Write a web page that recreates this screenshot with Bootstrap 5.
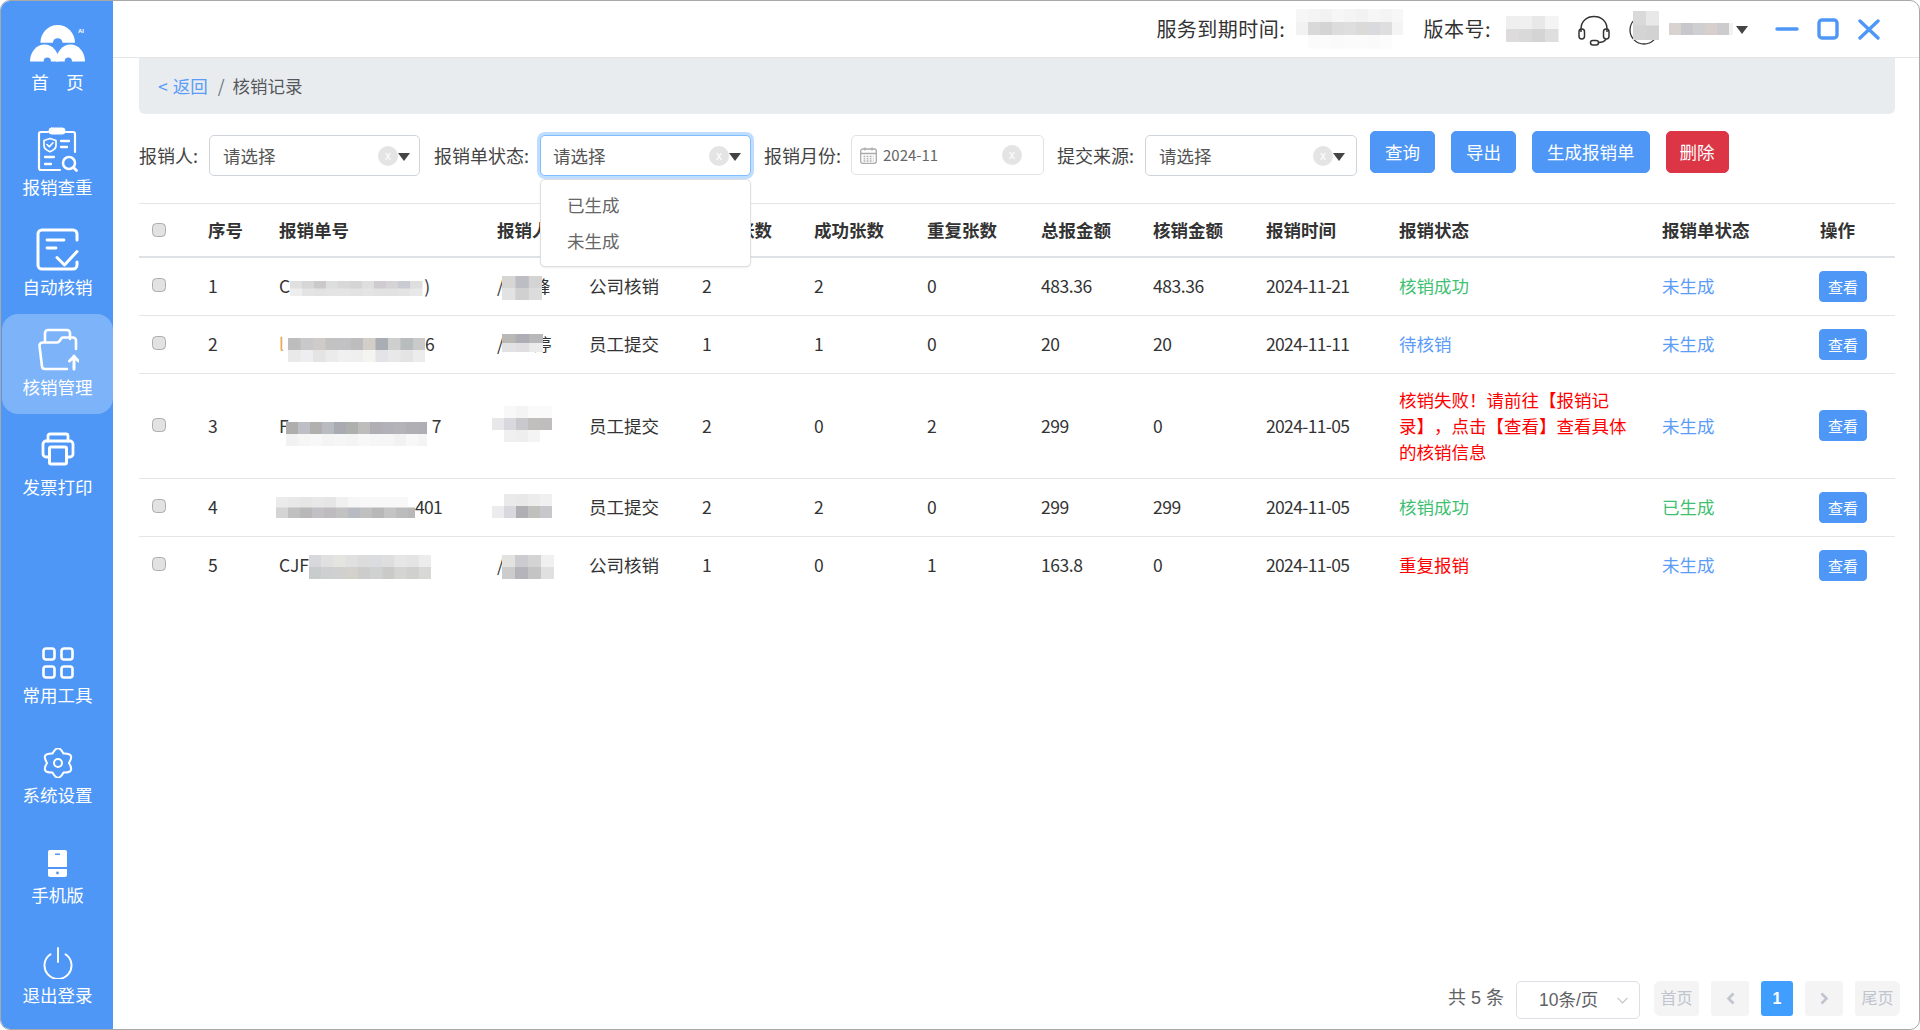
<!DOCTYPE html>
<html lang="zh-CN">
<head>
<meta charset="utf-8">
<title>核销记录</title>
<link rel="stylesheet" href="https://cdn.jsdelivr.net/npm/bootstrap@5.3.0/dist/css/bootstrap.min.css">
<style>
html,body{height:100%;margin:0;overflow:hidden;background:#fff}
body{font-family:"Noto Sans CJK SC","Liberation Sans",sans-serif;font-size:17.5px;color:#333;line-height:26px;text-spacing-trim:space-all}
:root{--brand:#4e97f6}
.frame{height:1030px;width:1920px;border:1px solid #a8a8a8;border-radius:10px;overflow:hidden}
.side{width:112px;background:var(--brand);color:#fff;flex:none;padding-top:13px}
.side svg{display:block;fill:none;stroke:#fff;stroke-width:2.6;stroke-linecap:round;stroke-linejoin:round}
.side svg.solid{stroke:none;fill:#fff}
.nav-tile{height:100px;margin-left:1px;padding-top:12px;border-radius:16px;text-align:center}
.nav-tile .ico{height:46px;margin-bottom:2px;display:flex;align-items:center;justify-content:center}
.nav-tile.first{padding-top:11px}
.nav-tile.first .ico{height:37px;margin-bottom:7px;position:relative}
.nav-tile.low{padding-top:25px}
.nav-tile.low .ico{height:32px;margin-bottom:3px}
.nav-tile.on{background:rgba(255,255,255,.27)}
.low-group{padding-bottom:7px}
.logo-ai{position:absolute;left:76px;top:3px;font:bold 6px/6px "Liberation Sans",sans-serif;color:#fff}
.topbar{height:57px;border-bottom:1px solid #e6e6e6;flex:none;padding-right:39px;font-size:20px;letter-spacing:.5px}
.top-mos-a{margin-left:11px}.top-lab-b{margin-left:20px}.top-mos-b{margin-left:15px}
.headset{margin-left:19px;margin-top:3px;flex:none}
.avatar-box{margin-left:19px;margin-top:1px;width:30px;height:30px;display:block;flex:none}
.mos.avatar-mos{left:4px;top:-4px;margin:0}
.user-mos{margin-left:10px}
.user-tri{margin-left:3px;margin-top:0;border-top-color:#222;border-left-width:6.5px;border-right-width:6.5px}
.winbtn{fill:none;stroke:var(--brand);stroke-width:3.4;stroke-linecap:round;stroke-linejoin:round;display:block;flex:none}
.w-min{margin-left:27px}.w-max{margin-left:18px}.w-close{margin-left:19px}
.main-pane{padding:0 24px 0 26px;min-width:0}
.bread{background:#e9ecef;height:56px;border-radius:0 0 6px 6px;padding:0 19px;margin:0;flex:none;align-items:center;color:#6c757d}
.bread a{color:#5b9cf8;text-decoration:none}
.bread a span{margin-left:5px}
.bread .breadcrumb-item+.breadcrumb-item{padding-left:10px}
.bread .breadcrumb-item+.breadcrumb-item::before{padding-right:8px;color:#6c757d}
.filters{margin-top:17px;height:72px;flex:none}
.lab{line-height:41px;margin-top:4px;color:#444;white-space:nowrap;font-size:18px;flex:none}
.lab-a{width:70px}.lab-b{width:106px}.lab-c{width:87px}.lab-d{width:88px}
.pick{width:211px;height:41px;margin:4px 14px 0 0;border:1px solid #ced4da;border-radius:5px;padding:0 9px 0 13px;color:#555;flex:none;position:relative;background:#fff;display:flex;align-items:center}
.pick.focus{border-color:#80bdff;box-shadow:0 0 0 3px rgba(0,123,255,.25);margin-right:13px;padding-left:12px}
.pick.date{width:193px;height:40px;border-color:#e2e2e2;padding-left:8px;font-size:15px;color:#666;margin-right:13px}
.pick.last{width:212px;margin-right:13px;padding-right:11px}
.cal{flex:none;margin-right:6px}
.clr{width:20px;height:20px;border-radius:50%;background:#e4e4e4;color:#fff;font:12px/20px "Liberation Sans",sans-serif;text-align:center;flex:none;margin-left:auto}
.clr.inset{margin-right:12px}
.tri{width:0;height:0;border-left:6px solid transparent;border-right:6px solid transparent;border-top:8px solid #444;flex:none;margin-top:2px}
.go{height:42px;padding:0 14px;font-size:17.5px;line-height:40px;border-radius:5px;background:var(--brand);border-color:var(--brand);color:#fff;flex:none}
.go.stop{background:#dc3545;border-color:#dc3545;padding:0 13px}
.go-wrap{gap:16px}
.menu-drop{display:block;position:absolute;left:-1px;top:43px;width:211px;height:88px;min-width:0;padding:7px 0;margin:0;border:1px solid #e0e0e0;border-radius:5px;font-size:17.5px;z-index:5;box-shadow:0 1px 2px rgba(0,0,0,.08)}
.menu-drop .dropdown-item{padding:5px 26px;line-height:26px;color:#666}
.grid-tb{table-layout:fixed;width:1756px;margin:0;--bs-table-border-color:#e3e5e8;color:#333;font-size:17.5px}
.grid-tb>:not(caption)>*>*{padding:13px 8px;vertical-align:middle;line-height:26px;white-space:nowrap}
.grid-tb thead th{font-weight:700;border-top:1px solid #e3e5e8;border-bottom:2px solid #dee2e6;height:53px;padding:0 8px;color:#333}
.grid-tb thead{border:0}
.grid-tb tbody tr:last-child td{border-bottom:0}
.grid-tb td.wrapit{white-space:normal;padding-right:20px}
.grid-tb tbody td:nth-child(9),.grid-tb tbody td:nth-child(10){letter-spacing:-.45px}
.grid-tb tbody td:nth-child(11){letter-spacing:-.65px}
.c1{width:61px}.c2{width:71px}.c3{width:218px}.c4{width:92px}.c5{width:113px}.c6{width:112px}.c7{width:113px}.c8{width:114px}.c9{width:112px}.c10{width:113px}.c11{width:133px}.c12{width:263px}.c13{width:158px}.c14{width:83px}
.chk{width:14px;height:14px;margin:0 0 4px 5px;vertical-align:middle;background:#e2e2e2;border:1px solid #adadad;border-radius:3px;float:none;display:inline-block}
tbody .chk{margin-bottom:6px}
.ok{color:#3fbf72}.info{color:#5b9cf8}.bad{color:#f00}
.see{width:48px;height:31px;padding:0;margin-left:-1px;font-size:15px;line-height:29px;background:var(--brand);border-color:var(--brand);border-radius:4px;color:#fff}
.mos{display:inline-block;vertical-align:middle;margin-block:-16px}
.ml-a{margin-left:-2px;position:relative;z-index:1}.ml-b{margin-left:4px}.ml-c{margin-left:-3px}.ml-d{margin-left:-5px}
.gl{display:inline-block;margin-left:-9px}.tail{margin-left:5px}.stray{color:#e8a860}.tight{letter-spacing:-.7px}
.pager{margin-top:auto;height:48px;flex:none;margin-right:-5px;font-family:"Liberation Sans","Noto Sans CJK SC",sans-serif;font-size:16px;color:#606266;gap:12px;padding-bottom:10px}
.tot{font-size:18px;line-height:35px}
.per{width:124px;height:38px;border:1px solid #dcdfe6;border-radius:5px;padding:0 11px 0 22px;display:flex;align-items:center;justify-content:space-between;margin-right:2px;font-size:17.5px}
.pager .pagination{gap:12px;margin:0;--bs-pagination-border-width:0}
.pager .page-link{height:35px;line-height:35px;padding:0;text-align:center;background:#f4f4f5;color:#c0c4cc;border-radius:3px;font-size:16px;display:flex;align-items:center;justify-content:center}
.pager .page-item:not(:first-child) .page-link{margin-left:0}
.pw-word{width:45px}.pw-arr{width:38px}.pw-num{width:32px;font-weight:700}
.pager .active .page-link{background:#409eff;color:#fff}
</style>
</head>
<body>
<div class="frame d-flex">
  <aside class="side d-flex flex-column">
    <div class="nav-tile first">
      <div class="ico">
        <svg class="solid" width="55" height="37" viewBox="0 0 55 37">
          <path d="M10.4 17.7A17.3 17.7 0 0 1 45 17.7Z"/><circle cx="27.7" cy="18" r="4.8" fill="#4e97f6"/>
          <path d="M0 36.5A14.5 17 0 0 1 29 36.5Z"/><path d="M26 36.5A14.5 17 0 0 1 55 36.5Z"/>
          <circle cx="17.3" cy="36" r="3.6" fill="#4e97f6"/><circle cx="38.3" cy="36" r="3.6" fill="#4e97f6"/>
        </svg>
        <span class="logo-ai">AI</span>
      </div>
      <div>首　页</div>
    </div>
    <div class="nav-tile">
      <div class="ico">
        <svg width="41" height="45" viewBox="0 0 41 45">
          <path d="M11 5H4a2 2 0 0 0-2 2V41a2 2 0 0 0 2 2H23M29 5H36a2 2 0 0 1 2 2V25" stroke-width="2.2"/>
          <rect x="12" y="1" width="16" height="6" rx="2.5" fill="#fff" stroke-width="1"/>
          <path d="M13 11.5l6 2v5c0 3-3 5-6 6.3c-3-1.3-6-3.3-6-6.3v-5z" stroke-width="1.7"/>
          <path d="M10 17.5l2.3 2.3l3.7-4" stroke-width="1.6"/>
          <path d="M24 14h8M24 20h6M8 30h9M8 37h6" stroke-width="2.3"/>
          <circle cx="32" cy="36" r="6" stroke-width="2.5"/><path d="M36.5 40.5L39.5 43.5" stroke-width="2.8"/>
        </svg>
      </div>
      <div>报销查重</div>
    </div>
    <div class="nav-tile">
      <div class="ico">
        <svg width="43" height="43" viewBox="0 0 43 43">
          <path d="M41 12V6a4 4 0 0 0-4-4H6a4 4 0 0 0-4 4V37a4 4 0 0 0 4 4H37a4 4 0 0 0 4-4V34" stroke-width="3"/>
          <path d="M11 12h17M11 20h9" stroke-width="2.8"/>
          <path d="M21 29.5l7.5 7.5L41 23.5" stroke-width="3"/>
        </svg>
      </div>
      <div>自动核销</div>
    </div>
    <div class="nav-tile on">
      <div class="ico">
        <svg width="42" height="43" viewBox="0 0 42 43">
          <path d="M8 13V5a3 3 0 0 1 3-3H30a3 3 0 0 1 3 3V11"/>
          <path d="M30 41H8a3 3 0 0 1-3-2.5L2.5 18a3 3 0 0 1 3-3.5H20a3 3 0 0 0 2.5-1.5L24 11a2 2 0 0 1 2-1.5H36a3 3 0 0 1 3 3V21"/>
          <path d="M37 41V28M32.5 33L37 28.5 41.5 33" stroke-width="3"/>
        </svg>
      </div>
      <div>核销管理</div>
    </div>
    <div class="nav-tile">
      <div class="ico">
        <svg width="34" height="34" viewBox="0 0 34 34">
          <path d="M7 9V4a2 2 0 0 1 2-2H25a2 2 0 0 1 2 2V9" stroke-width="2.8"/>
          <path d="M8 25H5a3 3 0 0 1-3-3V12a3 3 0 0 1 3-3H29a3 3 0 0 1 3 3V22a3 3 0 0 1-3 3H26" stroke-width="2.8"/>
          <rect x="8.5" y="15" width="17" height="17" rx="1.5" stroke-width="3"/>
        </svg>
      </div>
      <div>发票打印</div>
    </div>
    <div class="low-group mt-auto">
      <div class="nav-tile low">
        <div class="ico">
          <svg width="32" height="32" viewBox="0 0 32 32">
            <rect x="1.5" y="1.5" width="11" height="11" rx="2.5"/><rect x="19.5" y="1.5" width="11" height="11" rx="2.5"/>
            <rect x="1.5" y="19.5" width="11" height="11" rx="2.5"/><rect x="19.5" y="19.5" width="11" height="11" rx="2.5"/>
          </svg>
        </div>
        <div>常用工具</div>
      </div>
      <div class="nav-tile low">
        <div class="ico">
          <svg width="30" height="30" viewBox="0 0 30 30">
            <path d="M9.5 5.5Q15-5 20.5 5.5Q32.3 5 26 15Q32.3 25 20.5 24.5Q15 35 9.5 24.5Q-2.3 25 4 15Q-2.3 5 9.5 5.5Z" stroke-width="2"/>
            <circle cx="15" cy="15" r="4" stroke-width="2"/>
          </svg>
        </div>
        <div>系统设置</div>
      </div>
      <div class="nav-tile low">
        <div class="ico">
          <svg class="solid" width="19" height="27" viewBox="0 0 19 27">
            <path d="M2 0H17a2 2 0 0 1 2 2V17H0V2a2 2 0 0 1 2-2Z"/><path d="M0 19H19V25a2 2 0 0 1-2 2H2a2 2 0 0 1-2-2Z"/>
            <rect x="7" y="3.5" width="5" height="1.5" fill="#4e97f6"/><circle cx="9.5" cy="23" r="1.4" fill="#4e97f6"/>
          </svg>
        </div>
        <div>手机版</div>
      </div>
      <div class="nav-tile low">
        <div class="ico">
          <svg width="30" height="32" viewBox="0 0 30 32">
            <path d="M7.5 7.2A13.5 13.5 0 1 0 22.5 7.2" stroke-width="1.9"/><path d="M15 1V15" stroke-width="1.9"/>
          </svg>
        </div>
        <div>退出登录</div>
      </div>
    </div>
  </aside>

  <div class="flex-grow-1 d-flex flex-column">
    <header class="topbar d-flex align-items-center justify-content-end">
      <span>服务到期时间:</span>
      <svg class="mos top-mos-a" width="107" height="40" data-cw="12" data-rows="f6f6f6 f4f4f4 f2f2f2 f6f6f6 f4f4f4 f2f2f2 f6f6f6 f4f4f4 f7f7f7|f2f2f2 d9d9d9 d4d4d4 dcdcdc dedede dcd9d9 d9dadd dedede f4f4f4|ffffff fbfbfb fbfbfb fafafa fbfbfb fbfbfb fafafa fcfcfc ffffff" data-rh="13"></svg>
      <span class="top-lab-b">版本号:</span>
      <svg class="mos top-mos-b" width="53" height="26" data-cw="13" data-rows="f0efef f0f0f0 e8e8e8 f4f4f4|dddbdb d9d9d9 d4d4d4 dedede" data-rh="13"></svg>
      <svg class="headset" width="32" height="31" viewBox="0 0 32 31" fill="none" stroke="#333" stroke-width="1.5">
        <path d="M3 17V14C3 6 9 1.5 16 1.5S29 6 29 14V17"/>
        <rect x="1" y="14" width="5.5" height="10" rx="2.7"/><rect x="25.5" y="14" width="5.5" height="10" rx="2.7"/>
        <path d="M28 24C27 26.5 24 27.5 20 27.5"/><rect x="12.5" y="25.5" width="8" height="4.5" rx="2.2"/>
      </svg>
      <span class="avatar-box position-relative">
        <svg width="30" height="30" viewBox="0 0 30 30" fill="none" stroke="#333" stroke-width="1.3" class="d-block"><circle cx="15" cy="15" r="14"/></svg>
        <svg class="mos avatar-mos position-absolute" width="26" height="29" data-cw="13" data-rows="d9d9d9 e8e8e8|d4d4d4 d2d2d2" data-rh="14.5"></svg>
      </span>
      <svg class="mos user-mos" width="64" height="12" data-cw="12" data-rows="d8d2d0 c8c8cc cfcfd2 d6cfce cccccf f2f2f2" data-rh="12"></svg>
      <span class="tri user-tri"></span>
      <svg class="winbtn w-min" width="24" height="4" viewBox="0 0 24 4"><path d="M2 2H22"/></svg>
      <svg class="winbtn w-max" width="22" height="22" viewBox="0 0 22 22"><rect x="2" y="2" width="18" height="18" rx="3"/></svg>
      <svg class="winbtn w-close" width="22" height="21" viewBox="0 0 22 21"><path d="M2 2L20 19M20 2L2 19"/></svg>
    </header>

    <main class="main-pane d-flex flex-column flex-grow-1">
      <nav aria-label="breadcrumb">
        <ol class="breadcrumb bread d-flex">
          <li class="breadcrumb-item"><a href="#">&lt;<span>返回</span></a></li>
          <li class="breadcrumb-item active">核销记录</li>
        </ol>
      </nav>

      <div class="filters d-flex align-items-start">
        <span class="lab lab-a">报销人:</span>
        <div class="pick"><span>请选择</span><span class="clr">x</span><span class="tri"></span></div>
        <span class="lab lab-b">报销单状态:</span>
        <div class="pick focus"><span>请选择</span><span class="clr">x</span><span class="tri"></span>
          <ul class="dropdown-menu menu-drop">
            <li><a class="dropdown-item" href="#">已生成</a></li>
            <li><a class="dropdown-item" href="#">未生成</a></li>
          </ul>
        </div>
        <span class="lab lab-c">报销月份:</span>
        <div class="pick date">
          <svg class="cal" width="17" height="17" viewBox="0 0 17 17" fill="none" stroke="#aaa" stroke-width="1.3"><rect x=".7" y="2" width="15.6" height="14.3" rx="2"/><path d="M.7 6.5H16.3M5 .5V3.5M12 .5V3.5"/><path d="M3.5 9.5h10M3.5 11.8h10M3.5 14h10" stroke-dasharray="1.8 1.3"/></svg>
          <span>2024-11</span><span class="clr inset">x</span>
        </div>
        <span class="lab lab-d">提交来源:</span>
        <div class="pick last"><span>请选择</span><span class="clr">x</span><span class="tri"></span></div>
        <div class="d-flex go-wrap">
          <button class="btn go">查询</button>
          <button class="btn go">导出</button>
          <button class="btn go">生成报销单</button>
          <button class="btn go stop">删除</button>
        </div>
      </div>

      <table class="table grid-tb">
        <colgroup>
          <col class="c1"><col class="c2"><col class="c3"><col class="c4"><col class="c5"><col class="c6"><col class="c7"><col class="c8"><col class="c9"><col class="c10"><col class="c11"><col class="c12"><col class="c13"><col class="c14">
        </colgroup>
        <thead>
          <tr><th><input class="form-check-input chk" type="checkbox" aria-label="全选"></th><th>序号</th><th>报销单号</th><th>报销人</th><th>提交来源</th><th>发票张数</th><th>成功张数</th><th>重复张数</th><th>总报金额</th><th>核销金额</th><th>报销时间</th><th>报销状态</th><th>报销单状态</th><th>操作</th></tr>
        </thead>
        <tbody>
          <tr>
            <td><input class="form-check-input chk" type="checkbox" aria-label="选择"></td><td>1</td>
            <td>C<svg class="mos" width="134" height="15" data-cw="12" data-rows="e0e0e0 d6d6d6 ccc9cc dcdede d8d8d8 d5d5d5 dedede cfcbd0 d6d3d6 c8ccd2 dedede|eeeeee e4e4e4 e2e2e2 e4e4e4 e4e4e4 e2e2e2 e4e4e4 e2e2e2 e2e2e2 e4e4e4 e8e8e8" data-rh="7.5"></svg>)</td>
            <td>/<svg class="mos ml-a" width="40" height="24" data-cw="13.4" data-rows="d8d6d4 bdbdc4 d4d4d4|e2e2e2 d0d0d0 dcdcdc" data-rh="12"></svg><span class="gl">峰</span></td>
            <td>公司核销</td><td>2</td><td>2</td><td>0</td><td>483.36</td><td>483.36</td><td>2024-11-21</td><td class="ok">核销成功</td><td class="info">未生成</td><td><button class="btn see">查看</button></td>
          </tr>
          <tr>
            <td><input class="form-check-input chk" type="checkbox" aria-label="选择"></td><td>2</td>
            <td><span class="stray">l</span><svg class="mos ml-b" data-dy="4" width="137" height="24" data-cw="12.5" data-rows="bdbdbd c9c9cb cfcbc9 c2c2c2 c2c2c4 bdbdbd d2cec8 abadb5 cfcfcf b8bcbc cacaca|e9e9e9 eeeef0 e4e4e4 ebebeb f0f0f0 efefef f4f4f0 e4e4e8 e8e8e8 e4e4e4 ececec" data-rh="12"></svg>6</td>
            <td>/<svg class="mos ml-a" data-dy="-3" width="41" height="18" data-cw="13.7" data-rows="b8b8b4 aeadb5 b8b8b8|e2e2e2 e0dee0 ebebeb" data-rh="9"></svg><span class="gl">婷</span></td>
            <td>员工提交</td><td>1</td><td>1</td><td>0</td><td>20</td><td>20</td><td>2024-11-11</td><td class="info">待核销</td><td class="info">未生成</td><td><button class="btn see">查看</button></td>
          </tr>
          <tr>
            <td><input class="form-check-input chk" type="checkbox" aria-label="选择"></td><td>3</td>
            <td>F<svg class="mos ml-c" data-dy="6" width="141" height="24" data-cw="12" data-rows="b0aeac bcc0c4 b2b0ae b8bcc0 a8acb2 aeb0ae bebcbc b0aeb2 b2b0b8 b4b4b8 b0b0b4 aeaeb4|f2f2f2 f6f6f4 f8f8f8 f4f4f4 f6f6f6 f4f4f4 f8f8f8 f6f6f6 f6f6f6 f2f2f2 f8f8f8 f4f4f4" data-rh="12"></svg><span class="tail">7</span></td>
            <td><svg class="mos ml-d" data-dy="-4" width="60" height="36" data-cw="12" data-rows="ffffff f8f8f8 f4f4f4 fafafa fafafa|e8e8e8 d8d8de c9c9cd c0bfbe c0bdbe|ffffff f0f0f0 eeeeee f4f4f4 ffffff" data-rh="12"></svg></td>
            <td>员工提交</td><td>2</td><td>0</td><td>2</td><td>299</td><td>0</td><td>2024-11-05</td><td class="bad wrapit">核销失败！请前往【报销记录】，点击【查看】查看具体的核销信息</td><td class="info">未生成</td><td><button class="btn see">查看</button></td>
          </tr>
          <tr>
            <td><input class="form-check-input chk" type="checkbox" aria-label="选择"></td><td>4</td>
            <td><svg class="mos ml-c" data-dy="-2" width="139" height="21" data-cw="12" data-rows="ebebeb e8e8e8 e6e6e6 e8e8e8 e6e6e6 f0f0f0 f6f6f6 f8f8f8 f8f8f8 f8f8f8 f8f8f8 ffffff|d4d4d4 c0c0c0 b8b8b8 c2c0c4 bebcbe c2c2c2 b8bcc2 c0c0c0 b8b8b8 c4c4c4 bcbcbc b8b8b8" data-rh="10.5"></svg><span class="tight">401</span></td>
            <td><svg class="mos ml-d" data-dy="-3" width="60" height="24" data-cw="12" data-rows="ffffff eaeaea e8e8e8 ececec f0f0f0|ececec d8d8de b0b0b4 c0c0bc c8c8cc" data-rh="12"></svg></td>
            <td>员工提交</td><td>2</td><td>2</td><td>0</td><td>299</td><td>299</td><td>2024-11-05</td><td class="ok">核销成功</td><td class="ok">已生成</td><td><button class="btn see">查看</button></td>
          </tr>
          <tr>
            <td><input class="form-check-input chk" type="checkbox" aria-label="选择"></td><td>5</td>
            <td>CJF<svg class="mos" width="122" height="24" data-cw="12.2" data-rows="d8d8dc e0e0e0 e4e4e0 e0e0e0 dcdcdc dadce0 dedede e6e6e6 e4e4e4 ececec|c8cccc ccd0d0 d0d0d0 d4d0cc cccccc d0d2d2 cacac8 d4d4d0 d0d0ce d8d8d4" data-rh="12"></svg></td>
            <td>/<svg class="mos ml-a" width="52" height="24" data-cw="13" data-rows="e2e2de ccccd0 d4d4d4 f0f0f0|cccccc b4b4ba c4c4c4 e0e0e0" data-rh="12"></svg></td>
            <td>公司核销</td><td>1</td><td>0</td><td>1</td><td>163.8</td><td>0</td><td>2024-11-05</td><td class="bad">重复报销</td><td class="info">未生成</td><td><button class="btn see">查看</button></td>
          </tr>
        </tbody>
      </table>

      <div class="pager d-flex justify-content-end align-items-start">
        <span class="tot">共 5 条</span>
        <div class="per"><span>10条/页</span>
          <svg width="11" height="7" viewBox="0 0 11 7" fill="none" stroke="#c0c4cc" stroke-width="1.2"><path d="M.6.8L5.5 5.8 10.4.8"/></svg>
        </div>
        <ul class="pagination">
          <li class="page-item disabled"><span class="page-link pw-word">首页</span></li>
          <li class="page-item disabled"><span class="page-link pw-arr"><svg width="9" height="13" viewBox="0 0 9 13" fill="none" stroke="#c0c4cc" stroke-width="2.6"><path d="M7.5 1.5L2.5 6.5 7.5 11.5"/></svg></span></li>
          <li class="page-item active"><span class="page-link pw-num">1</span></li>
          <li class="page-item disabled"><span class="page-link pw-arr"><svg width="9" height="13" viewBox="0 0 9 13" fill="none" stroke="#c0c4cc" stroke-width="2.6"><path d="M1.5 1.5L6.5 6.5 1.5 11.5"/></svg></span></li>
          <li class="page-item disabled"><span class="page-link pw-word">尾页</span></li>
        </ul>
      </div>
    </main>
  </div>
</div>
<script>
document.querySelectorAll('svg.mos').forEach(function(s){
  var cw=+s.dataset.cw, rh=+s.dataset.rh, out='';
  s.dataset.rows.split('|').forEach(function(r,y){
    r.split(' ').forEach(function(c,x){
      out+='<rect x="'+(x*cw)+'" y="'+(y*rh)+'" width="'+(cw+.5)+'" height="'+(rh+.5)+'" fill="#'+c+'"/>';
    });
  });
  s.innerHTML=out;
  if(s.dataset.dy) s.style.transform='translateY('+s.dataset.dy+'px)';
});
</script>
<script src="https://cdn.jsdelivr.net/npm/bootstrap@5.3.0/dist/js/bootstrap.bundle.min.js"></script>
</body>
</html>
